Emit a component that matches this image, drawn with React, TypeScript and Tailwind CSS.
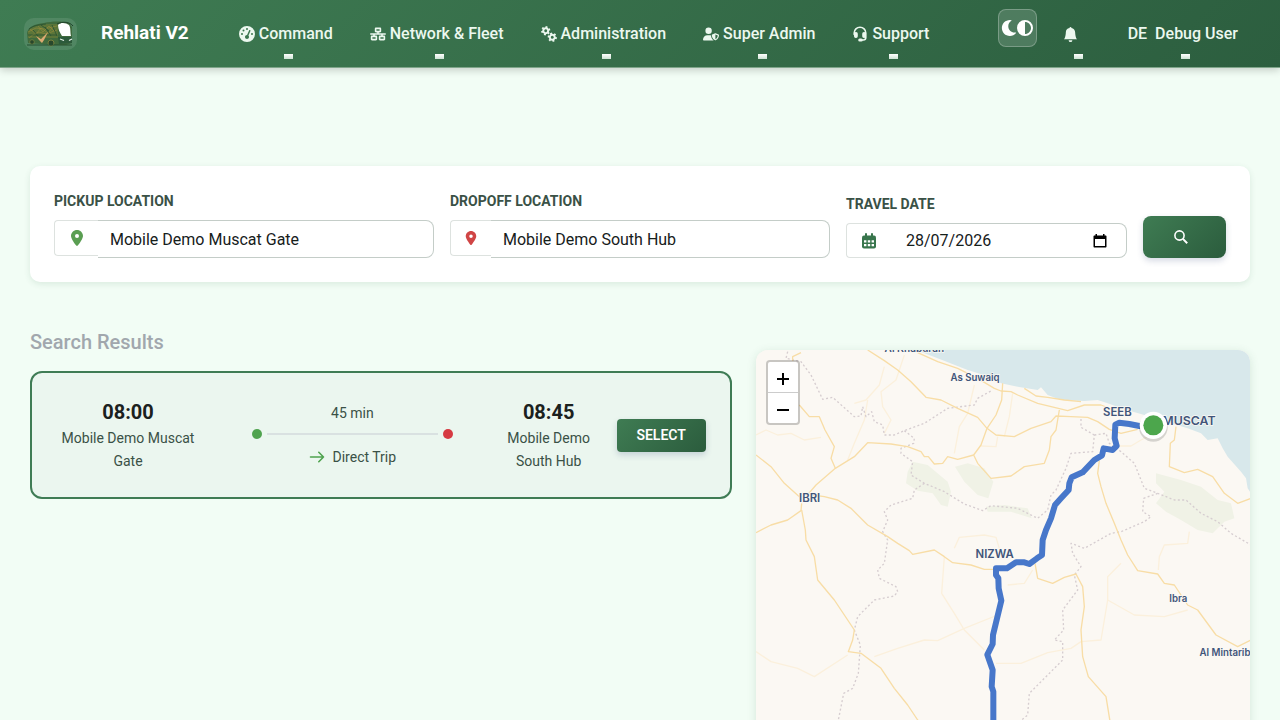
import type { ReactNode, SVGProps } from "react";
import {
  FaCircleHalfStroke,
  FaGaugeHigh,
  FaLocationDot,
  FaNetworkWired,
  FaUserShield,
} from "react-icons/fa6";
import { FaMoon } from "react-icons/fa";
import { BsBellFill } from "react-icons/bs";

const TEETH = [0, 60, 120];

function GearsIcon(props: SVGProps<SVGSVGElement>) {
  return (
    <svg viewBox="0 0 17 17" fill="none" stroke="currentColor" {...props}>
      {[
        { x: 5, y: 5, turn: 12 },
        { x: 12, y: 12, turn: 42 },
      ].map((g) => (
        <g key={g.x} transform={`translate(${g.x} ${g.y}) rotate(${g.turn})`}>
          <circle r="2.6" strokeWidth="2.1" />
          {TEETH.map((a) => (
            <path key={a} d="M0 -4.9 V-3 M0 3 V4.9" strokeWidth="2.1" transform={`rotate(${a})`} />
          ))}
        </g>
      ))}
    </svg>
  );
}

function HeadsetIcon(props: SVGProps<SVGSVGElement>) {
  return (
    <svg viewBox="0 0 16 16" fill="none" stroke="currentColor" strokeWidth="1.6" {...props}>
      <path d="M2.2 8.5 V7 A5.8 5.8 0 0 1 13.8 7 V11.5 Q13.8 14 11.3 14 H9.5" strokeLinecap="round" />
      <rect x="2.8" y="6.8" width="2.2" height="4.4" rx="1" fill="currentColor" />
      <rect x="11" y="6.8" width="2.2" height="4.4" rx="1" fill="currentColor" />
      <rect x="7" y="13.2" width="3" height="1.6" rx="0.8" fill="currentColor" />
    </svg>
  );
}

function CalendarIcon(props: SVGProps<SVGSVGElement>) {
  return (
    <svg viewBox="0 0 16 16" {...props}>
      <rect x="1" y="2.5" width="14" height="13" rx="2" fill="currentColor" />
      <path d="M5 1 V4 M11 1 V4" stroke="currentColor" strokeWidth="2" strokeLinecap="round" />
      <path d="M3 7.2 H5.4 V9.4 H3 Z M6.8 7.2 H9.2 V9.4 H6.8 Z M10.6 7.2 H13 V9.4 H10.6 Z M3 11 H5.4 V13.2 H3 Z M6.8 11 H9.2 V13.2 H6.8 Z M10.6 11 H13 V13.2 H10.6 Z" fill="#fff" />
    </svg>
  );
}

const NAV = [
  { label: "Command", icon: FaGaugeHigh },
  { label: "Network & Fleet", icon: FaNetworkWired },
  { label: "Administration", icon: GearsIcon },
  { label: "Super Admin", icon: FaUserShield },
  { label: "Support", icon: HeadsetIcon },
];

// Map geometry, three units to a pixel.
const ROADS = [
  "350,30 400,62 440,90 480,125 525,172 570,180 620,205 680,232 708,265 735,285 790,290 840,265 900,245 915,228 960,230 1010,232 1040,245 1075,268 1110,280 1160,268",
  "500,38 560,65 620,85 680,115 730,145 750,153 780,155 800,165 860,190 950,212 1000,195 1050,195 1090,210",
  "755,130 752,180 735,225 708,265 690,315 668,345 680,370 720,415 780,408 820,380 880,370 895,330 900,290 915,270 925,210",
  "145,195 175,230 205,230 222,270 250,320 240,355 253,385",
  "15,345 60,380 100,430 145,470",
  "165,470 195,435 253,385 310,350 350,308 420,312 470,320 510,335 520,350 532,350 550,372 575,370 590,350 620,358 668,345",
  "185,465 220,470 260,480 300,505 350,555 410,590 440,610 475,632 485,643 550,630 580,650 605,668 660,675 700,688 735,688",
  "15,578 60,555 110,540 150,512 152,490",
  "152,510 163,570 165,600 190,650 200,720 250,780 310,870 305,900 292,935 330,940 390,985 430,1045 470,1095 500,1140 600,1280",
  "125,62 125,50 150,38",
  "1045,362 1040,400 1050,440 1065,490 1090,550 1110,600 1130,645 1160,692 1220,702 1240,730 1270,735 1310,795 1340,810 1395,885 1460,920 1500,900",
  "1275,260 1270,300 1258,310 1255,380 1300,398 1340,388 1385,410 1420,460 1460,490 1500,475",
  "852,670 860,715 905,730 940,712 975,702 995,740 1000,800 990,870 995,950 1012,1010 1065,1070 1078,1150 1090,1300",
  "820,145 855,168 890,172 940,180 990,185",
];

const LANES = [
  "15,285 45,270 80,285 120,280 160,300 210,292",
  "400,80 385,135 345,180 310,190",
  "460,45 435,120 390,155 395,200 420,240 400,280",
  "350,180 340,240 310,310 290,360",
  "670,135 650,220 625,260 610,340",
  "785,160 775,230 760,290",
  "740,290 735,320 690,318",
  "580,650 572,760 610,820 640,870 700,930",
  "370,950 440,925 520,900 560,902 640,865 740,825",
  "15,935 60,965 140,985 190,1010 290,945",
  "735,970 810,970 890,938 960,925 990,905 1050,900 1070,780 1070,710 1110,670",
  "1070,780 1150,825 1240,830 1310,810",
  "610,625 625,592 700,585 735,592 745,625",
  "1222,690 1225,650 1240,615 1310,610 1315,575",
  "770,735 820,730 845,690",
  "1100,318 1140,318 1170,300 1200,285",
];

const BOUNDARIES = [
  "110,35 105,55 150,65 180,105 215,178 245,172 310,230 330,228 335,200 345,230 362,215 370,245 395,255 400,285 430,285 460,272 520,250 590,205 670,195 680,175 725,150",
  "460,272 490,295 488,310 450,325 450,340 485,365 480,405 520,430 580,455 640,492 695,512 720,497 800,505 860,535 890,510 900,465 915,450 945,385 960,340 1025,335 1030,285",
  "520,430 490,450 485,475 420,495 400,515 410,540 395,575 410,600 400,670 380,690 385,715 435,740 440,755 430,768 370,780 320,830 310,870 328,915 322,1000 305,1045 278,1060 262,1140 240,1260",
  "1030,285 990,262 990,235",
  "1030,285 1065,280 1075,310 1110,335 1150,370 1170,420 1180,445 1220,460 1270,480 1305,480 1350,520 1400,545 1440,580 1500,615",
  "1220,460 1178,475 1175,515 1200,530 1180,545 1110,575 1080,580 1000,625 960,610 965,640 990,680 970,705 980,750 935,810 938,870 910,900 935,905 935,960 835,1060 830,1125 800,1150 780,1300",
];

const PARKS = [
  "485,365 530,375 590,425 600,455 590,500 570,495 545,460 500,452 465,430 470,395",
  "612,380 650,370 700,385 727,425 712,475 680,465 640,425",
  "1215,400 1290,420 1350,440 1400,480 1440,490 1450,535 1420,545 1385,580 1340,570 1290,540 1245,515 1215,490 1240,455 1215,430",
  "705,500 760,495 830,505 842,535 780,515 710,515",
];

const ROUTE =
  "1200,256 1165,258 1135,252 1105,248 1093,254 1091,295 1097,318 1085,330 1058,325 1053,346 1030,360 995,397 962,412 955,430 953,450 930,475 912,495 900,535 885,570 875,600 873,645 858,655 835,672 820,667 795,667 768,685 735,685 735,705 742,715 743,745 751,782 726,885 725,912 709,944 725,990 722,1040 727,1055 727,1400";

const PLACES = [
  { name: "Al Khaburah", x: 490, y: 37, size: 30 },
  { name: "As Suwaiq", x: 672, y: 124, size: 29 },
  { name: "IBRI", x: 176, y: 486, size: 34 },
  { name: "SEEB", x: 1099, y: 227, size: 34 },
  { name: "MUSCAT", x: 1314, y: 254, size: 37 },
  { name: "NIZWA", x: 731, y: 654, size: 34 },
  { name: "Ibra", x: 1282, y: 787, size: 29 },
  { name: "Al Mintarib", x: 1422, y: 949, size: 29 },
];

function BusLogo() {
  return (
    <svg viewBox="0 0 53 32" className="h-8 w-[53px]" aria-hidden="true">
      <path d="M3 15 C4 9 10 6 20 5 C28 3 39 3 45 5 L48 9 L48 25 L42 27 H30 L4 25 Z" fill="#3f6a3d" />
      <path d="M4 14 C7 8 14 7 21 6 L34 6 L34 20 L4 20 Z" fill="#5b7539" />
      <path d="M4 14 L12 10 L20 11 L33 8 M7 18 L15 14 L22 16 L33 12 M6 11 L12 16 L17 10 L24 15 L30 8 M5 20 L10 16 M14 8 L19 14 L25 8 L32 15" fill="none" stroke="#a3913f" strokeWidth="0.5" />
      <path d="M5 11 C10 7 15 7 22 6 M9 12 L14 18 M21 9 L27 18 M17 7 L25 13 M4 17 H33 M28 7 L33 18" fill="none" stroke="#2a5533" strokeWidth="0.9" />
      <path d="M34 7 C37 4 42 5 45 7 C47 10 46 14 47 18 L38 18 C36 15 34 11 34 7 Z" fill="#fff" />
      <path d="M33 6 C39 3 46 4 49 8" fill="none" stroke="#20422b" strokeWidth="1" />
      <path d="M34 19 L48 19 L48 25 L35 26 Z" fill="#2c5a3b" />
      <path d="M36 21 L40 22.5 M45 22.5 L48 21" stroke="#e9f4ec" strokeWidth="1.2" />
      <path d="M12 18 L17 21 L24 14 L20 22 L18 25 L15 22 Z" fill="#dcaa73" />
      <circle cx="27" cy="25" r="3" fill="#28472c" stroke="#8a8d43" strokeWidth="0.8" />
      <circle cx="8" cy="24" r="2.3" fill="#28472c" stroke="#8a8d43" strokeWidth="0.6" />
      <path d="M3 27 H48" stroke="#274f31" strokeWidth="1" />
    </svg>
  );
}

function NavItem({
  children,
  label,
  className = "",
}: {
  children: ReactNode;
  label?: string;
  className?: string;
}) {
  return (
    <a href="#" aria-label={label} className={`flex flex-col items-center pt-[22px] ${className}`}>
      <span className="flex h-6 items-center gap-1 whitespace-nowrap">{children}</span>
      <span className="mt-2 ml-[6px] h-[5px] w-[9px] bg-linear-to-b from-white to-[#cfe3d5]" />
    </a>
  );
}

function Header() {
  return (
    <header className="flex h-[68px] items-start border-b border-[#7fa58a] bg-linear-[135deg] from-[#3f7c53] to-[#2c5e3f] pr-[42px] pl-6 font-medium text-[#ecf8ef] shadow-[0_2px_8px_rgba(0,0,0,0.2)]">
      <a href="#" className="flex h-[67px] items-center gap-6 text-[19px] font-bold text-white">
        <span className="overflow-hidden rounded-[10px] bg-white/10">
          <BusLogo />
        </span>
        Rehlati V2
      </a>
      <nav className="ml-[50px] flex gap-[37px]">
        {NAV.map(({ label, icon: Icon }) => (
          <NavItem key={label}>
            <Icon className="size-4" />
            {label}
          </NavItem>
        ))}
      </nav>
      <div className="ml-auto flex items-start">
        <button
          aria-label="Toggle theme"
          className="mt-[9px] flex h-[38px] w-[39px] items-center justify-center rounded-lg border border-white/25 bg-white/15 text-white"
        >
          <FaMoon className="size-4 shrink-0" />
          <FaCircleHalfStroke className="size-4 shrink-0" />
        </button>
        <NavItem label="Notifications" className="ml-[26px]">
          <BsBellFill className="mr-[10px] size-[15px]" />
        </NavItem>
        <NavItem className="ml-10">
          <span className="mr-1">DE</span>
          Debug User
        </NavItem>
      </div>
    </header>
  );
}

function PlaceField({
  id,
  label,
  value,
  icon,
  iconWidth,
}: {
  id: string;
  label: string;
  value: string;
  icon: ReactNode;
  iconWidth: string;
}) {
  return (
    <div className="col-span-4">
      <label htmlFor={id} className="mb-2 block text-sm leading-[22px] font-bold text-[#3a5146] uppercase">
        {label}
      </label>
      <div className="flex items-start">
        <span className={`flex h-9 shrink-0 items-center justify-center rounded-l border border-r-0 border-[#dde2df] ${iconWidth}`}>
          {icon}
        </span>
        <input
          id={id}
          defaultValue={value}
          className="h-[38px] min-w-0 flex-1 rounded-r-lg border border-l-0 border-[#c4cdc8] bg-white px-3 text-base text-[#16201b] outline-none"
        />
      </div>
    </div>
  );
}

function SearchForm() {
  return (
    <form className="grid grid-cols-12 items-end gap-4 rounded-[10px] bg-white p-6 shadow-[0_2px_6px_rgba(45,100,65,0.12)]">
      <PlaceField
        id="pickup"
        label="Pickup Location"
        value="Mobile Demo Muscat Gate"
        iconWidth="w-11"
        icon={<FaLocationDot className="size-4 text-[#5a9e52]" />}
      />
      <PlaceField
        id="dropoff"
        label="Dropoff Location"
        value="Mobile Demo South Hub"
        iconWidth="w-[41px]"
        icon={<FaLocationDot className="size-[14px] text-[#d04545]" />}
      />
      <div className="col-span-3">
        <label htmlFor="date" className="mb-2 block text-sm leading-[22px] font-bold text-[#3a5146] uppercase">
          Travel Date
        </label>
        <div className="flex h-[35px]">
          <span className="flex w-11 shrink-0 items-center justify-center rounded-l border border-r-0 border-[#dde2df]">
            <CalendarIcon className="size-4 text-[#38754c]" />
          </span>
          <span className="flex min-w-0 flex-1 items-center rounded-r-lg border border-l-0 border-[#c4cdc8] pr-[18px] pl-4">
            <input
              id="date"
              defaultValue="28/07/2026"
              className="min-w-0 flex-1 text-base leading-6 text-[#16201b] outline-none"
            />
            <button type="button" aria-label="Open calendar">
              <svg viewBox="0 0 16 16" className="size-4 fill-black">
                <path d="M13.5 2.5H12.5V1H11V2.5H5V1H3.5V2.5H2.5C1.9 2.5 1.5 2.9 1.5 3.5V13.5C1.5 14.1 1.9 14.5 2.5 14.5H13.5C14.1 14.5 14.5 14.1 14.5 13.5V3.5C14.5 2.9 14.1 2.5 13.5 2.5ZM13 13H3V6H13Z" />
              </svg>
            </button>
          </span>
        </div>
      </div>
      <button
        type="submit"
        aria-label="Search"
        className="flex h-[42px] items-center justify-center rounded-lg bg-linear-[135deg] from-[#3f7c53] to-[#2b5c3d] pr-2 text-white shadow-[0_3px_6px_rgba(50,70,120,0.2)]"
      >
        <svg viewBox="0 0 14 14" className="size-[14px]" fill="none" stroke="currentColor">
          <circle cx="5.5" cy="5.5" r="4.6" strokeWidth="1.6" />
          <path d="M8.9 8.9 L13.2 13.2" strokeWidth="2" />
        </svg>
      </button>
    </form>
  );
}

function Stop({ time, place, className }: { time: string; place: string; className: string }) {
  return (
    <div className={`shrink-0 text-center ${className}`}>
      <div className="text-xl leading-[30px] font-bold text-[#1b211e]">{time}</div>
      <div className="text-sm leading-[23px] text-[#3a5146]">{place}</div>
    </div>
  );
}

function TripCard() {
  return (
    <article className="flex items-center gap-4 rounded-xl border-2 border-[#3f7c55] bg-[#ebf6ef] p-6">
      <div className="flex flex-1 items-center gap-11">
        <Stop time="08:00" place="Mobile Demo Muscat Gate" className="mr-2 w-36" />
        <div className="flex-1 text-center text-sm leading-[23px] text-[#3a5146]">
          <div>45 min</div>
          <div className="mt-1 mb-[7px] flex items-center gap-[5px]">
            <span className="size-[10px] rounded-full bg-[#4fa34f]" />
            <span className="h-0.5 flex-1 bg-[#d9e1e1]" />
            <span className="size-[10px] rounded-full bg-[#d63a42]" />
          </div>
          <div className="flex items-center justify-center gap-2">
            <svg
              viewBox="0 0 16 16"
              className="size-4 text-[#4fa34f]"
              fill="none"
              stroke="currentColor"
              strokeWidth="1.6"
              strokeLinecap="round"
              strokeLinejoin="round"
            >
              <path d="M1.5 8 H14.5 M9.8 3.3 L14.5 8 L9.8 12.7" />
            </svg>
            Direct Trip
          </div>
        </div>
        <Stop time="08:45" place="Mobile Demo South Hub" className="w-[104px]" />
      </div>
      <button className="h-[33px] w-[89px] shrink-0 rounded bg-linear-[135deg] from-[#3f7c53] to-[#2b5c3d] text-sm font-semibold text-white shadow-[0_3px_6px_rgba(50,70,120,0.2)]">
        SELECT
      </button>
    </article>
  );
}

function RouteMap() {
  return (
    <section
      aria-label="Route map"
      className="relative h-[450px] overflow-hidden rounded-xl bg-[#fbf8f3] shadow-[0_2px_10px_rgba(45,100,65,0.15)]"
    >
      <svg viewBox="15 30 1485 1350" preserveAspectRatio="xMinYMin slice" className="size-full">
        <rect x="15" y="30" width="1485" height="1350" fill="#fbf8f3" />
        <path
          d="M495 30 L560 55 L650 90 L730 115 L750 130 L800 140 L860 150 L870 142 L890 165 L930 180 L1000 183 L1040 180 L1070 190 L1120 208 L1180 225 L1260 250 L1310 265 L1350 280 L1370 300 L1400 295 L1415 325 L1430 350 L1470 395 L1485 415 L1490 445 L1500 460 V30 Z"
          fill="#d8e8eb"
        />
        {PARKS.map((points) => (
          <polygon key={points} points={points} fill="#f0f2e6" />
        ))}
        <g fill="none" strokeLinejoin="round">
          {LANES.map((points) => (
            <polyline key={points} points={points} stroke="#fbf0dc" strokeWidth="4" />
          ))}
          {BOUNDARIES.map((points) => (
            <polyline key={points} points={points} stroke="#d6cdd0" strokeWidth="4" strokeDasharray="6 7" />
          ))}
          {ROADS.map((points) => (
            <polyline key={points} points={points} stroke="#f8dda6" strokeWidth="4" />
          ))}
        </g>
        <g className="fill-[#41557a] font-[Inter,sans-serif] font-semibold" textAnchor="middle" stroke="#fbf8f3" strokeWidth="4" paintOrder="stroke">
          {PLACES.map((p) => (
            <text key={p.name} x={p.x} y={p.y} fontSize={p.size}>
              {p.name}
            </text>
          ))}
        </g>
        <polyline points={ROUTE} fill="none" stroke="#4777ca" strokeWidth="18" strokeLinejoin="round" />
        <circle cx="1207" cy="262" r="43" fill="#000" opacity="0.15" />
        <circle cx="1207" cy="256" r="41" fill="#fff" />
        <circle cx="1207" cy="256" r="30" fill="#4ca64c" />
      </svg>
      <div className="absolute top-[10px] left-[10px] w-[34px] overflow-hidden rounded border-2 border-black/20 bg-white bg-clip-padding text-black">
        <button aria-label="Zoom in" className="flex h-[31px] w-full items-center justify-center border-b border-[#ccc] pt-1">
          <svg viewBox="0 0 12 12" className="size-3" stroke="currentColor" strokeWidth="2">
            <path d="M6 0V12M0 6H12" />
          </svg>
        </button>
        <button aria-label="Zoom out" className="flex h-[30px] w-full items-center justify-center pt-1">
          <svg viewBox="0 0 12 12" className="size-3" stroke="currentColor" strokeWidth="2">
            <path d="M0 6H12" />
          </svg>
        </button>
      </div>
    </section>
  );
}

export default function App() {
  return (
    <div className="h-screen overflow-x-hidden overflow-y-auto bg-[#f2fdf5] font-[Roboto,sans-serif] [scrollbar-width:none]">
      <Header />
      <main className="px-[30px] pt-[98px]">
        <SearchForm />
        <div className="mt-12 grid grid-cols-12 gap-6">
          <div className="col-span-7">
            <h2 className="mb-4 text-xl leading-[25px] font-medium text-[#a1a7ad]">Search Results</h2>
            <TripCard />
          </div>
          <div className="col-span-5 mt-5">
            <RouteMap />
          </div>
        </div>
      </main>
    </div>
  );
}
